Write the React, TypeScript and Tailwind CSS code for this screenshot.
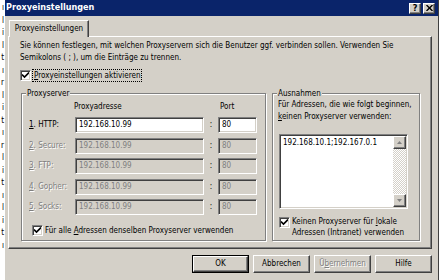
import React from "react";

const sunken =
  "border border-t-[#808080] border-l-[#808080] border-b-white border-r-white shadow-[inset_1px_1px_0_#404040,inset_-1px_-1px_0_#d4d0c8]";
const raised =
  "border border-t-white border-l-white border-b-[#404040] border-r-[#404040] shadow-[inset_-1px_-1px_0_#808080,inset_1px_1px_0_#d4d0c8]";
const etched = "border border-[#808080] shadow-[1px_1px_0_#fff,inset_1px_1px_0_#fff]";
const disabledText = "text-[#808080] [text-shadow:1px_1px_0_#fff]";

function Check() {
  return (
    <span className={`flex h-[11px] w-[11px] shrink-0 items-center justify-center bg-white ${sunken}`}>
      <svg width="7" height="7" viewBox="0 0 7 7">
        <path d="M0 2.5 L2.5 5 L7 0.5" fill="none" stroke="#000" strokeWidth="1.6" />
      </svg>
    </span>
  );
}

function Group({ title, className, children }: { title: string; className: string; children: React.ReactNode }) {
  return (
    <div className={`relative ${etched} ${className}`}>
      <span className="absolute -top-[6px] left-[4px] bg-[#d4d0c8] px-[1px] leading-[11px]">{title}</span>
      {children}
    </div>
  );
}

const rows = [
  { n: "1", label: "HTTP:", on: true },
  { n: "2", label: "Secure:", on: false },
  { n: "3", label: "FTP:", on: false },
  { n: "4", label: "Gopher:", on: false },
  { n: "5", label: "Socks:", on: false },
];

// fragments of the window behind the dialog
const behind = ["ı", "l", "i", "l", "t", "ı", "r", "l", "i", "t", "ı", "r", "l", "i", "t", "ı", "l", "i", "t", "ı"];

function Button({ label, def, disabled }: { label: React.ReactNode; def?: boolean; disabled?: boolean }) {
  return (
    <div className={`h-[18px] w-[57px] ${def ? "border border-black" : ""}`}>
      <div className={`flex h-full w-full items-center justify-center ${raised} ${disabled ? disabledText : ""}`}>
        {label}
      </div>
    </div>
  );
}

export default function App() {
  return (
    <div className="flex h-[280px] w-[439px] overflow-hidden bg-white font-['DejaVu_Sans_Condensed','DejaVu_Sans',sans-serif] text-[8px] text-black">
      <div className="flex w-[5px] shrink-0 flex-col items-end pr-[1px] pt-[2px] text-[8px] leading-[12.5px]">
        {behind.map((c, i) => (
          <span key={i}>{c}</span>
        ))}
      </div>

      <div className="flex flex-1 flex-col border-r border-[#404040] bg-[#d4d0c8]">
        <div className="flex h-[16px] shrink-0 items-center justify-between bg-[#0a246a] pl-[1px] pr-[3px]">
          <span className="text-[9px] font-bold text-white">Proxyeinstellungen</span>
          <div className="flex gap-[2px]">
            <div className={`flex h-[11px] w-[12px] items-center justify-center bg-[#d4d0c8] text-[9px] font-bold leading-none ${raised}`}>?</div>
            <div className={`flex h-[11px] w-[12px] items-center justify-center bg-[#d4d0c8] ${raised}`}>
              <svg width="7" height="6" viewBox="0 0 7 6">
                <path d="M0.5 0 L6.5 6 M6.5 0 L0.5 6" stroke="#000" strokeWidth="1.4" />
              </svg>
            </div>
          </div>
        </div>

        <div className="ml-[3px] mt-[4px] w-[424px]">
          <div className="relative z-10 -mb-[1px] ml-[1px] flex h-[17px] w-[80px] items-center justify-center border border-b-0 border-l-white border-t-white border-r-[#404040] bg-[#d4d0c8] shadow-[inset_-1px_0_0_#808080]">
            Proxyeinstellungen
          </div>
          <div className="flex h-[213px] flex-col border border-b-[#404040] border-l-white border-r-[#404040] border-t-white pl-[11px] shadow-[inset_-1px_-1px_0_#808080]">
            <p className="whitespace-nowrap pt-[3px] leading-[12px]">
              Sie können festlegen, mit welchen Proxyservern sich die Benutzer ggf. verbinden sollen. Verwenden Sie
              <br />
              Semikolons ( ; ), um die Einträge zu trennen.
            </p>
            <div className="mt-[6px] flex h-[11px] items-center gap-[1px]">
              <Check />
              <span className="border border-dotted border-black px-[1px] leading-[11px]">
                <u>P</u>roxyeinstellungen aktivieren
              </span>
            </div>

            <div className="ml-[1px] mt-[12px] flex gap-[6px]">
              <Group title="Proxyserver" className="h-[148px] w-[245px] pt-[8px]">
                <div className="flex h-[10px] items-center pl-[7px] leading-[10px]">
                  <span className="w-[46px]" />
                  <span className="-ml-[1px] w-[144px]">Proxyadresse</span>
                  <span className="ml-[1px] pl-[1px]">Port</span>
                </div>
                <div className="mt-[5px] flex flex-col gap-[4.5px]">
                  {rows.map((r) => (
                    <div key={r.n} className="flex h-[16px] items-center pl-[7px]">
                      <span className={`w-[46px] ${r.on ? "" : disabledText}`}>
                        <u>{r.n}</u>. {r.label}
                      </span>
                      <div className={`flex h-full w-[129px] items-center pl-[3px] ${sunken} ${r.on ? "bg-white" : "text-[#808080]"}`}>
                        192.168.10.99
                      </div>
                      <span className="w-[14px] text-center">:</span>
                      <div className={`flex h-full w-[39px] items-center pl-[3px] ${sunken} ${r.on ? "bg-white" : "text-[#808080]"}`}>
                        80
                      </div>
                    </div>
                  ))}
                </div>
                <div className="mt-[10px] flex h-[11px] items-center gap-[2px] pl-[10px]">
                  <Check />
                  <span>
                    Für alle <u>A</u>dressen denselben Proxyserver verwenden
                  </span>
                </div>
              </Group>

              <Group title="Ausnahmen" className="h-[148px] w-[148px] pt-[5px]">
                <p className="pl-[5px] leading-[12px]">
                  Für Adressen, die wie folgt beginnen,
                  <br />
                  <u>k</u>einen Proxyserver verwenden:
                </p>
                <div className={`ml-[6px] mt-[11px] flex h-[75px] w-[129px] bg-white ${sunken}`}>
                  <div className="flex-1 pl-[3px] pt-[3px] leading-[10px]">192.168.10.1;192.167.0.1</div>
                  <div className="m-[1px] ml-0 flex w-[13px] flex-col bg-[#ecebe7] bg-[repeating-conic-gradient(#fff_0_25%,#d4d0c8_0_50%)] bg-[length:2px_2px]">
                    <div className={`flex h-[13px] items-center justify-center bg-[#d4d0c8] ${raised}`}>
                      <svg width="5" height="3" viewBox="0 0 5 3">
                        <path d="M2.5 0 L5 3 L0 3 Z" fill="#808080" />
                      </svg>
                    </div>
                    <div className="flex-1" />
                    <div className={`flex h-[13px] items-center justify-center bg-[#d4d0c8] ${raised}`}>
                      <svg width="5" height="3" viewBox="0 0 5 3">
                        <path d="M0 0 L5 0 L2.5 3 Z" fill="#808080" />
                      </svg>
                    </div>
                  </div>
                </div>
                <div className="ml-[6px] mt-[7px] flex gap-[2px]">
                  <div className="mt-[1px]">
                    <Check />
                  </div>
                  <p className="leading-[11px]">
                    Keinen Proxyserver für <u>l</u>okale
                    <br />
                    Adressen (Intranet) verwenden
                  </p>
                </div>
              </Group>
            </div>
          </div>

          <div className="mt-[6px] flex justify-end gap-[4px]">
            <Button label="OK" def />
            <Button label="Abbrechen" />
            <Button
              disabled
              label={
                <span>
                  Ü<u>b</u>ernehmen
                </span>
              }
            />
            <Button label="Hilfe" />
          </div>
        </div>
      </div>
    </div>
  );
}
